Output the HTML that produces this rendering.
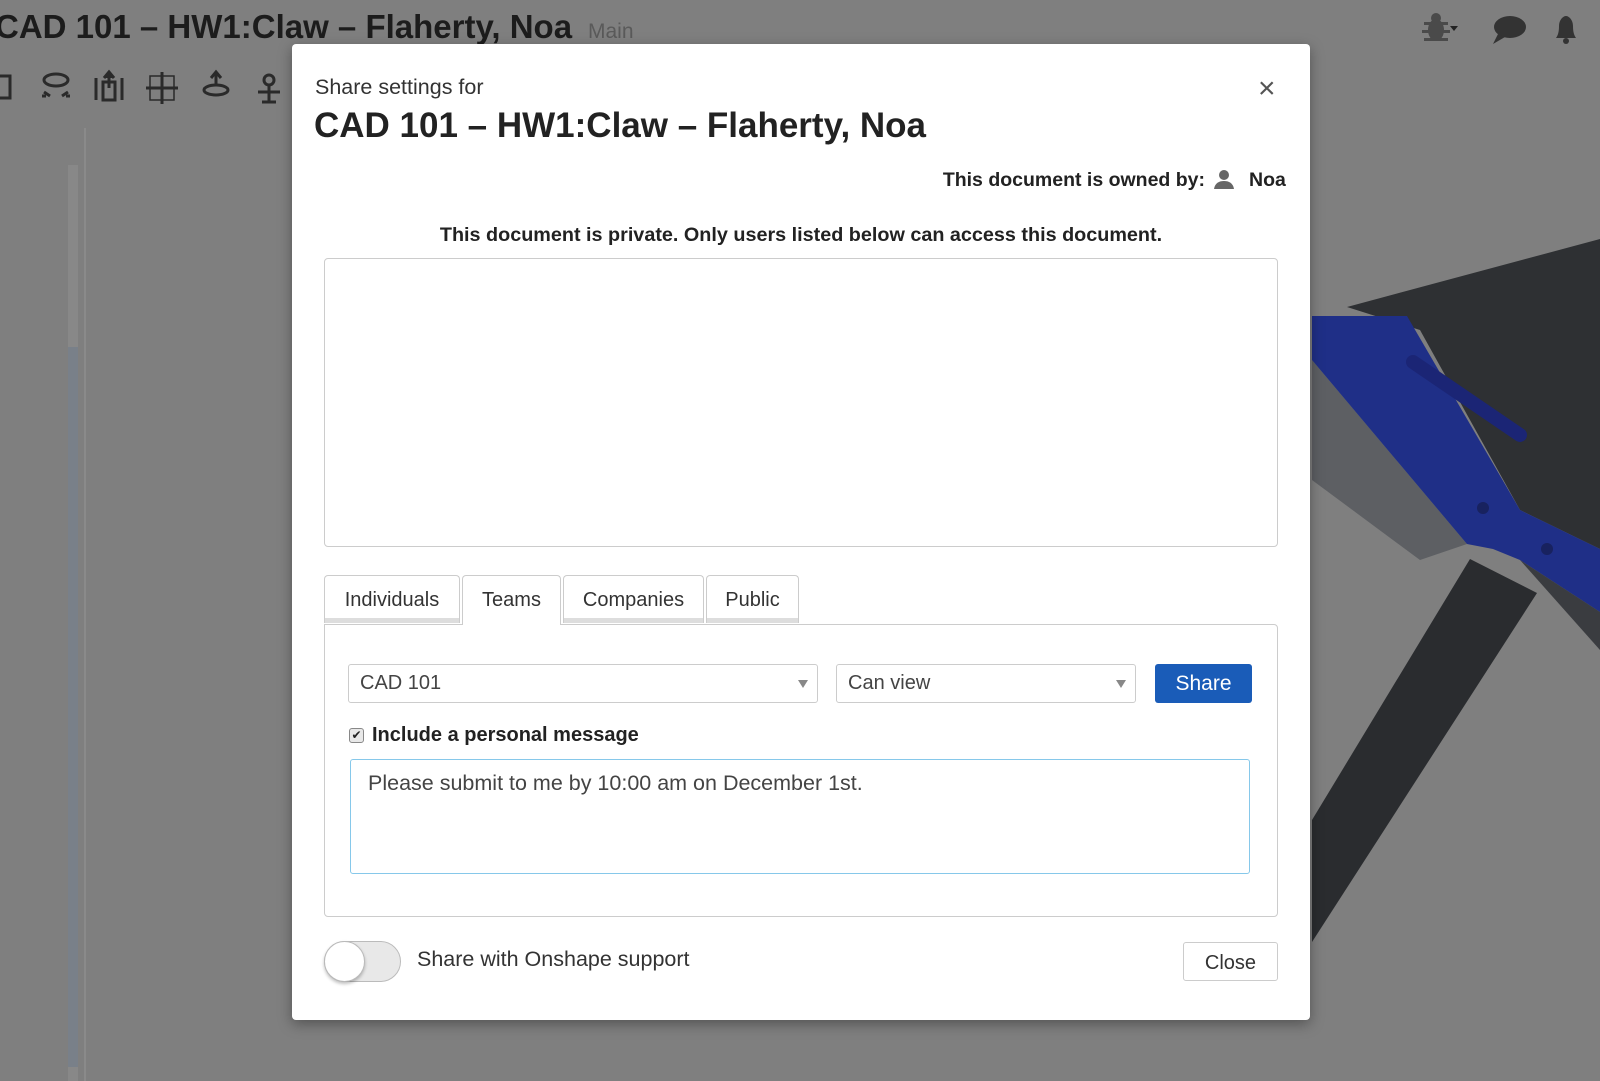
<!DOCTYPE html>
<html><head><meta charset="utf-8"><style>
*{box-sizing:border-box;margin:0;padding:0}
body{width:1600px;height:1081px;overflow:hidden;background:#7f7f7f;font-family:"Liberation Sans",sans-serif;position:relative;color:#222}
.a{position:absolute}
.modal{left:292px;top:44px;width:1018px;height:976px;background:#fff;border-radius:4px;box-shadow:0 4px 14px rgba(0,0,0,.35)}
.t{position:absolute;white-space:nowrap}
.tab{position:absolute;top:575px;height:48px;border:1px solid #ccc;border-bottom:none;border-radius:4px 4px 0 0;background:#fff;font-size:20px;color:#333;text-align:center;line-height:48px;box-shadow:inset 0 -5px 0 #ddd}
.sel{position:absolute;top:664px;height:39px;border:1px solid #ccc;border-radius:3px;font-size:20px;color:#444;line-height:37px;padding-left:11px;background:#fff}
.sel:after{content:"";position:absolute;right:9px;top:15px;border-left:5px solid transparent;border-right:5px solid transparent;border-top:8px solid #888}
</style></head><body>
<div class="t" style="left:-5px;top:8px;font-size:33px;font-weight:bold;color:#1c1c1c">CAD 101 – HW1:Claw – Flaherty, Noa</div>
<div class="t" style="left:588px;top:20px;font-size:21px;color:#5a5a5a">Main</div>
<svg class="a" style="left:0;top:68px" width="290" height="40" viewBox="0 0 290 40" fill="none" stroke="#2a2a2a" stroke-width="3">
<path d="M-4 8h14v22h-14"/>
<ellipse cx="56" cy="12" rx="12" ry="6"/><path d="M44 24l6 4M68 24l-6 4M46 28h-4M66 28h4"/>
<path d="M96 10v22M122 10v22M103 14h12v18h-12z"/><path d="M109 20v-14M104 10l5-6 5 6" fill="#2a2a2a"/>
<rect x="150" y="8" width="24" height="24" stroke-width="1.5"/><path d="M162 4v32M146 20h32"/>
<ellipse cx="216" cy="22" rx="12" ry="5"/><path d="M216 18v-12M211 10l5-6 5 6"/>
<circle cx="269" cy="12" r="5"/><path d="M269 17v16M258 24h22M262 34h14"/>
</svg>
<svg class="a" style="left:1420px;top:12px" width="180" height="34" viewBox="0 0 180 34">
<g fill="#4a4a4a"><ellipse cx="16" cy="18" rx="8" ry="11"/><circle cx="16" cy="6" r="5"/><path d="M4 10h24v3H4zM2 18h28v3H2zM4 26h24v3H4z"/></g>
<path d="M30 14h8l-4 5z" fill="#222"/>
<ellipse cx="90" cy="15" rx="16" ry="11" fill="#333"/><path d="M78 22l-5 10 12-7z" fill="#333"/>
<path d="M136 26c2-3 3-6 3-12 0-6 4-10 7-10s7 4 7 10c0 6 1 9 3 12z" fill="#333"/><circle cx="146" cy="29" r="3" fill="#333"/>
</svg>
<div class="a" style="left:84px;top:128px;width:2px;height:953px;background:#8a8a8a"></div>
<div class="a" style="left:68px;top:165px;width:10px;height:916px;background:#888"></div>
<div class="a" style="left:68px;top:347px;width:10px;height:720px;background:#6f7c8a;opacity:.6"></div>
<svg class="a" style="left:1300px;top:200px" width="300" height="800" viewBox="1300 200 300 800">
<polygon points="1312,360 1467,544 1420,560 1312,480" fill="#5d5f63"/>
<polygon points="1347,307 1600,239 1600,549 1520,510 1420,330" fill="#2e3033"/>
<polygon points="1312,316 1407,316 1520,510 1600,549 1600,612 1520,560 1493,549 1467,544 1312,360" fill="#1f2f87"/>
<polygon points="1600,612 1520,560 1600,650" fill="#3a3c40"/>
<polygon points="1470,559 1537,593 1312,942 1312,820" fill="#2a2c2f"/>
<path d="M1413,362 L1520,435" stroke="#1b2575" stroke-width="14" stroke-linecap="round"/>
<circle cx="1483" cy="508" r="6" fill="#18225f"/><circle cx="1547" cy="549" r="6" fill="#18225f"/>
</svg>
<div class="a modal">
<div class="t" style="left:23px;top:31px;font-size:21.5px;color:#333">Share settings for</div>
<div class="t" style="left:22px;top:62px;font-size:35px;font-weight:bold;color:#222">CAD 101 – HW1:Claw – Flaherty, Noa</div>
<div class="t" style="left:966px;top:28px;font-size:30px;color:#555">×</div>
<div class="t" style="right:105px;top:125px;font-size:19.5px;font-weight:bold">This document is owned by:</div>
<svg class="a" style="left:921px;top:124px" width="22" height="22" viewBox="0 0 22 22"><circle cx="11" cy="7" r="5" fill="#666"/><path d="M1 21c1-6 5-8 10-8s9 2 10 8z" fill="#666"/></svg>
<div class="t" style="left:957px;top:125px;font-size:19.5px;font-weight:bold">Noa</div>
<div class="t" style="left:0;width:1018px;text-align:center;top:180px;font-size:19.8px;font-weight:bold">This document is private. Only users listed below can access this document.</div>
<div class="a" style="left:32px;top:214px;width:954px;height:289px;border:1px solid #ccc;border-radius:4px"></div>
<div class="a" style="left:32px;top:580px;width:954px;height:293px;border:1px solid #ccc;border-radius:0 4px 4px 4px"></div>
</div>
<div class="tab" style="left:324px;width:136px">Individuals</div>
<div class="tab" style="left:462px;width:99px;height:50px;box-shadow:none">Teams</div>
<div class="tab" style="left:563px;width:141px">Companies</div>
<div class="tab" style="left:706px;width:93px">Public</div>
<div class="sel" style="left:348px;width:470px">CAD 101</div>
<div class="sel" style="left:836px;width:300px">Can view</div>
<div class="a" style="left:1155px;top:664px;width:97px;height:39px;background:#1a5cb8;border-radius:3px;color:#fff;font-size:21px;text-align:center;line-height:40px">Share</div>
<div class="a" style="left:349px;top:728px;width:15px;height:15px;border:1px solid #888;border-radius:3px;background:#e8e8e8;font-size:12px;line-height:13px;text-align:center;color:#222">✔</div>
<div class="t" style="left:372px;top:724px;font-size:20px;font-weight:bold;color:#222">Include a personal message</div>
<div class="a" style="left:350px;top:759px;width:900px;height:115px;border:1.5px solid #86c8ea;border-radius:3px"></div>
<div class="t" style="left:368px;top:771px;font-size:21.5px;color:#444">Please submit to me by 10:00 am on December 1st.</div>
<div class="a" style="left:324px;top:941px;width:77px;height:41px;border:1px solid #bbb;border-radius:21px;background:#e8e8e8"></div>
<div class="a" style="left:324px;top:941px;width:41px;height:41px;border-radius:50%;background:#fff;border:1px solid #bbb;box-shadow:0 2px 3px rgba(0,0,0,.25)"></div>
<div class="t" style="left:417px;top:947px;font-size:21.5px;color:#333">Share with Onshape support</div>
<div class="a" style="left:1183px;top:942px;width:95px;height:39px;border:1px solid #ccc;border-radius:3px;font-size:20px;text-align:center;line-height:40px;color:#333">Close</div>
</body></html>
